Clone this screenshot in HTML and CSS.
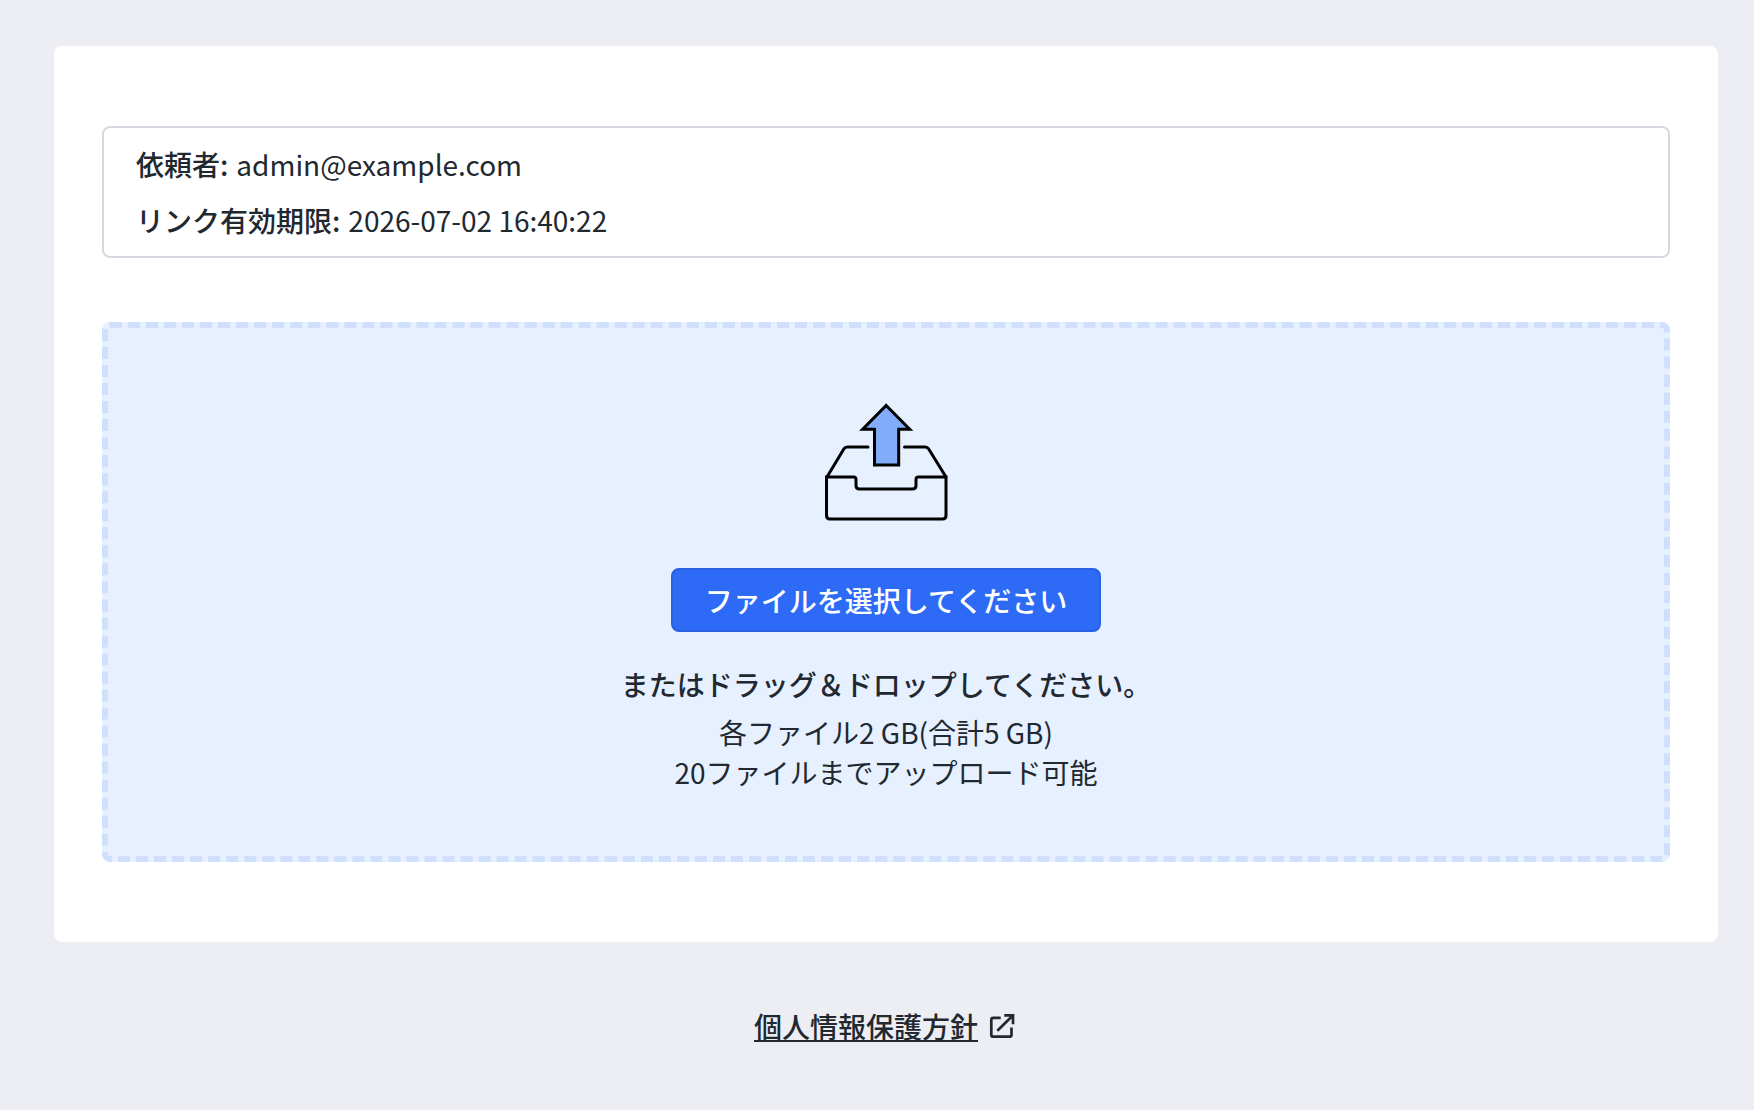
FILE: index.html
```html
<!DOCTYPE html>
<html lang="ja">

<head>
    <meta charset="UTF-8">
    <meta name="viewport" content="width=device-width, initial-scale=1.0">
    <title>ファイルアップロード</title>
    <link rel="stylesheet" href="styles.css">
</head>

<body>
    <main class="card">
        <!-- Request details -->
        <dl class="info">
            <div class="info-row">
                <dt>依頼者:</dt>
                <dd>admin@example.com</dd>
            </div>
            <div class="info-row">
                <dt>リンク有効期限:</dt>
                <dd>2026-07-02 16:40:22</dd>
            </div>
        </dl>

        <!-- Drop area -->
        <div class="dropzone">
            <svg class="upload-icon" viewBox="0 0 128 128" fill="none" stroke="#000" stroke-width="3" stroke-linecap="round">
                <path d="M46 49H25.500q-2.500 0-3.700 2L5 79M82.500 49h20.500q2.500 0 3.700 2L124 79"/>
                <path d="M4.500 79H31.500q2.500 0 2.500 2.500v6q0 3.500 3.500 3.500h53q3.500 0 3.500-3.500v-6q0-2.500 2.500-2.500h27.500v38.500q0 3.500-3.500 3.500H8q-3.500 0-3.500-3.500z"/>
                <path d="M64.200 7.500L87.700 31.200H76.700V67H52.500V31.200H40.700z" fill="#80acfa"/>
            </svg>
            <button type="button" class="select-button">ファイルを選択してください</button>
            <p class="drop-title">またはドラッグ＆ドロップしてください。</p>
            <p>各ファイル2 GB(合計5 GB)</p>
            <p>20ファイルまでアップロード可能</p>
        </div>
    </main>

    <footer class="footer">
        <a href="#" class="policy-link">
            <span>個人情報保護方針</span>
            <svg class="external-icon" viewBox="0 0 32 32" fill="none" stroke="#212830" stroke-width="2.700">
                <path d="M14.700 7.900H7.300q-2 0-2 2v14.800q0 2 2 2h16.200q2 0 2-2v-7.200M18.300 5.300h8.700v9M27 5.300L11.300 20.700"/>
            </svg>
        </a>
    </footer>
</body>

</html>
```
FILE: styles.css
```css
* {
    box-sizing: border-box;
}

body {
    margin: 0;
    padding: 46px 36px 0 54px;
    min-height: 100vh;
    font-family: "Noto Sans CJK JP", sans-serif;
    font-size: 28px;
    line-height: 40px;
    color: #212830;
    background-color: #edeef3;
}

p,
dl,
dd {
    margin: 0;
}

.card {
    height: 896px;
    padding: 80px 48px;
    background-color: #fff;
    border-radius: 8px;
}

.info {
    height: 132px;
    margin-bottom: 64px;
    padding: 8px 32px;
    border: 2px solid #d5d9df;
    border-radius: 8px;
}

.info-row {
    display: flex;
    gap: 8px;
    line-height: 56px;
}

.info dt {
    font-weight: 500;
}

.dropzone {
    display: flex;
    flex-direction: column;
    align-items: center;
    height: 540px;
    padding-top: 70px;
    background-color: #e6f0ff;
    border: 6px dashed #cfdffc;
    border-radius: 8px;
}

.upload-icon {
    width: 128px;
    height: 128px;
}

.select-button {
    height: 64px;
    margin: 42px 0 32px;
    padding: 0 32px;
    font-family: inherit;
    font-size: 28px;
    font-weight: 500;
    line-height: 40px;
    color: #fff;
    background-color: #2d6bf6;
    border: 2px solid #2961de;
    border-radius: 8px;
    cursor: pointer;
}

.drop-title {
    margin-bottom: 8px;
    font-weight: 500;
}

.footer {
    display: flex;
    justify-content: center;
    margin-top: 64px;
}

.policy-link {
    display: flex;
    align-items: center;
    gap: 8px;
    font-weight: 500;
    color: #212830;
}

.external-icon {
    width: 32px;
    height: 32px;
}
```
